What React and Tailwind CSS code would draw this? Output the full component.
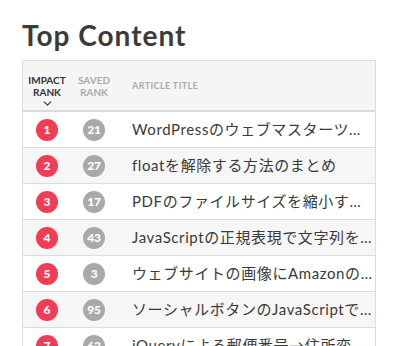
import { ChevronDown } from 'lucide-react';

const rows = [
  { impact: 1, saved: 21, title: 'WordPressのウェブマスターツールの設定方法' },
  { impact: 2, saved: 27, title: 'floatを解除する方法のまとめ' },
  { impact: 3, saved: 17, title: 'PDFのファイルサイズを縮小する方法' },
  { impact: 4, saved: 43, title: 'JavaScriptの正規表現で文字列を置換する' },
  { impact: 5, saved: 3, title: 'ウェブサイトの画像にAmazonの商品画像を使う' },
  { impact: 6, saved: 95, title: 'ソーシャルボタンのJavaScriptで遅延読み込み' },
  { impact: 7, saved: 62, title: 'jQueryによる郵便番号→住所変換の実装' },
  { impact: 8, saved: 12, title: 'CSSだけで作るレスポンシブなナビゲーション' },
];

const font = { fontFamily: '"Lato", "Noto Sans CJK JP", sans-serif' };

const App = () => {
  return (
    <div className="bg-white h-[346px] overflow-hidden pt-[18px] pl-[22px]" style={font}>
      <h1 className="text-[28px] font-bold text-[#3b3b3b] leading-[34px] tracking-[1px]">Top Content</h1>

      <div className="mt-[8px] w-[354px] border border-[#dcdcdc]">
        {/* header */}
        <div className="flex h-[51px] bg-[#f5f5f5] border-b-2 border-[#dcdcdc] items-start">
          <div className="w-[48px] flex flex-col items-center pt-[13px] text-[10px] font-bold leading-[12px] text-[#333]">
            <span>IMPACT</span>
            <span>RANK</span>
            <ChevronDown className="w-[13px] h-[13px] -mt-[1px] text-[#444]" strokeWidth={2.5} />
          </div>
          <div className="w-[46px] flex flex-col items-center pt-[13px] text-[10px] font-bold leading-[12px] text-[#aaaaaa]">
            <span>SAVED</span>
            <span>RANK</span>
          </div>
          <div className="pl-[15px] pt-[19px] text-[9px] font-bold leading-[12px] text-[#aaaaaa] tracking-[0.4px]">
            ARTICLE TITLE
          </div>
        </div>

        {rows.map((r, i) => (
          <div
            key={r.impact}
            className={`flex items-center h-[36px] border-b border-[#dcdcdc] ${i % 2 === 1 ? 'bg-[#f6f6f6]' : 'bg-white'}`}
          >
            <div className="w-[48px] flex justify-center">
              <span className="w-[22px] h-[22px] rounded-full bg-[#f03c55] text-white text-[12px] font-black flex items-center justify-center">
                {r.impact}
              </span>
            </div>
            <div className="w-[46px] flex justify-center">
              <span className="w-[22px] h-[22px] rounded-full bg-[#aaa8aa] text-white text-[12px] font-black flex items-center justify-center tracking-[-0.3px]">
                {r.saved}
              </span>
            </div>
            <div className="pl-[15px] pr-[3px] flex-1 min-w-0 truncate text-[15px] tracking-[0.6px] text-[#3a3a3a]">
              {r.title}
            </div>
          </div>
        ))}
      </div>
    </div>
  );
};

export default App;
